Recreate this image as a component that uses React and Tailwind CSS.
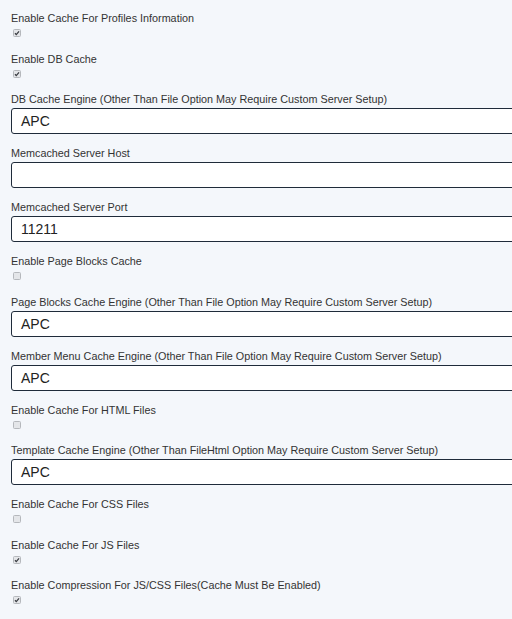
import React from "react";

const fields = [
    { type: "check", label: "Enable Cache For Profiles Information", checked: true },
    { type: "check", label: "Enable DB Cache", checked: true },
    { type: "input", label: "DB Cache Engine (Other Than File Option May Require Custom Server Setup)", value: "APC" },
    { type: "input", label: "Memcached Server Host", value: "" },
    { type: "input", label: "Memcached Server Port", value: "11211" },
    { type: "check", label: "Enable Page Blocks Cache", checked: false },
    { type: "input", label: "Page Blocks Cache Engine (Other Than File Option May Require Custom Server Setup)", value: "APC" },
    { type: "input", label: "Member Menu Cache Engine (Other Than File Option May Require Custom Server Setup)", value: "APC" },
    { type: "check", label: "Enable Cache For HTML Files", checked: false },
    { type: "input", label: "Template Cache Engine (Other Than FileHtml Option May Require Custom Server Setup)", value: "APC" },
    { type: "check", label: "Enable Cache For CSS Files", checked: false },
    { type: "check", label: "Enable Cache For JS Files", checked: true },
    { type: "check", label: "Enable Compression For JS/CSS Files(Cache Must Be Enabled)", checked: true },
];

// tiny greyed-out checkbox, like the original disabled look
const Box = ({ checked }) => (
    <svg width="8" height="8" viewBox="0 0 8 8" className="block">
        <rect x="0.5" y="0.5" width="7" height="7" rx="1" fill="#e4e6e9" stroke="#b5b8bc" />
        {checked && <path d="M2 4.2 L3.3 5.6 L6 2.4" fill="none" stroke="#3a3d42" strokeWidth="1.3" />}
    </svg>
);

export default function App() {
    return (
        <div
            className="min-h-screen w-[512px] overflow-hidden bg-[#f4f7fb] pt-[11px] pl-[11px] text-[#333]"
            style={{ fontFamily: '"Liberation Sans", Arial, sans-serif' }}
        >
            {fields.map((f, i) =>
                f.type === "check" ? (
                    <div key={i} className="h-[40.5px]">
                        <div className="text-[10.8px] leading-[14px] whitespace-nowrap">{f.label}</div>
                        <div className="mt-[4px] ml-[2px]">
                            <Box checked={f.checked} />
                        </div>
                    </div>
                ) : (
                    <div key={i} className="h-[54px]">
                        <div className="text-[10.8px] leading-[14px] whitespace-nowrap">{f.label}</div>
                        <div className="mt-[2px] h-[26px] w-[560px] rounded-[3px] border border-[#1f2b3a] bg-white pl-[9px] text-[14px] leading-[24px] text-[#222]">
                            {f.value}
                        </div>
                    </div>
                )
            )}
        </div>
    );
}
